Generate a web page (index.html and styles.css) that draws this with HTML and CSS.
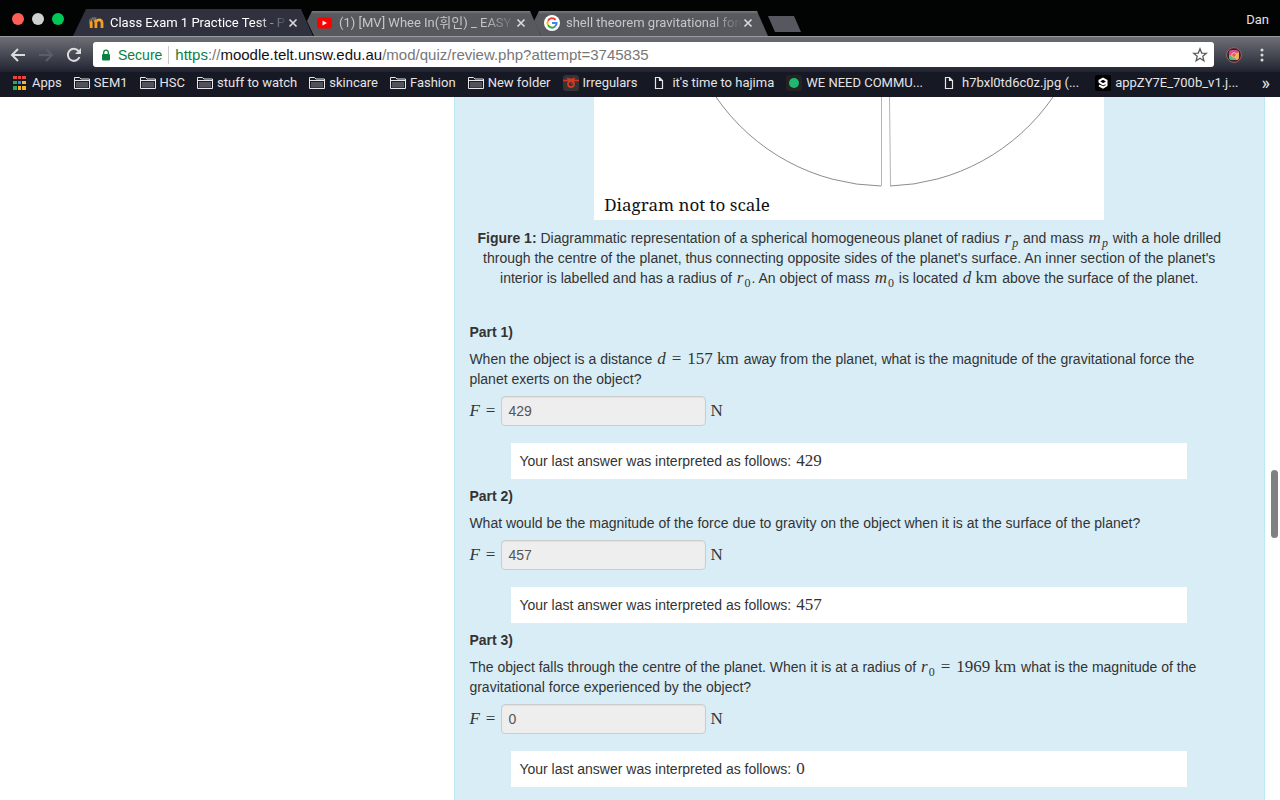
FILE: index.html
```html
<!DOCTYPE html>
<html lang="en">
<head>
<meta charset="utf-8">
<title>Class Exam 1 Practice Test</title>
<link rel="stylesheet" href="styles.css">
</head>
<body>
<svg class="defs" aria-hidden="true">
  <symbol id="folder" viewBox="0 0 16 14"><path d="M.5 12.500V1.500H5.500L7 3H15.500V12.500Z" fill="#1a1c27" stroke="#e6e6e8"/><path d="M2 6H14V11.500H2Z" fill="#50535d"/><path d="M1 4.500H15" stroke="#e6e6e8"/></symbol>
  <symbol id="page" viewBox="0 0 10 14"><path d="M1.500 1.500H5.500L8.500 4.500V12.500H1.500ZM5.500 1.500V4.500H8.500" fill="none" stroke="#e6e6e8" stroke-width="1.200"/></symbol>
  <symbol id="close" viewBox="0 0 10 10"><path d="M1.500 1.500L8.500 8.500M8.500 1.500L1.500 8.500" stroke="#d8d8da" stroke-width="1.700"/></symbol>
</svg>
<header class="browser">
  <div class="tabstrip">
    <div class="lights"><span class="light red"></span><span class="light grey"></span><span class="light green"></span></div>
    <div class="tabs">
      <div class="tab active">
        <svg class="favicon" viewBox="0 0 16 16"><path d="M3.200 13V6.500M7.900 13V7.500Q7.900 5 5.700 5M8.500 6Q9.500 4.800 11 4.800 14 4.800 14 8V13" fill="none" stroke="#f39c1f" stroke-width="2.800"/><path d="M3.200 5V7M9 5Q11 4 13 5" stroke="#f7b959" fill="none"/><path d="M1 4.500L5 2 9 2.500 6.500 5.500Z" fill="#6b6762"/><path d="M1.500 4.500V9.500" stroke="#777" stroke-width=".8"/></svg>
        <span class="title">Class Exam 1 Practice Test - P</span>
        <button class="close" aria-label="Close tab"><svg><use href="#close"/></svg></button>
      </div>
      <div class="tab">
        <svg class="favicon" viewBox="0 0 16 16"><rect x="0" y="2.500" width="15" height="11" rx="2.500" fill="#f00"/><path d="M5.500 5.500L10 8 5.500 10.500Z" fill="#fff"/></svg>
        <span class="title">(1) [MV] Whee In(휘인) _ EASY</span>
        <button class="close" aria-label="Close tab"><svg><use href="#close"/></svg></button>
      </div>
      <div class="tab">
        <svg class="favicon" viewBox="0 0 16 16"><circle cx="8" cy="8" r="8" fill="#fff"/><g fill="none" stroke-width="2"><path d="M11.600 4.900A4.600 4.600 0 0 0 4 5.700" stroke="#ea4335"/><path d="M4 5.700A4.600 4.600 0 0 0 4 10.300" stroke="#fbbc05"/><path d="M4 10.300A4.600 4.600 0 0 0 11 11.500" stroke="#34a853"/><path d="M11 11.500A4.600 4.600 0 0 0 12.600 8H8" stroke="#4285f4"/></g></svg>
        <span class="title">shell theorem gravitational forc</span>
        <button class="close" aria-label="Close tab"><svg><use href="#close"/></svg></button>
      </div>
      <button class="newtab" aria-label="New tab"></button>
    </div>
    <button class="profile">Dan</button>
  </div>
  <div class="toolbar">
    <button class="nav" aria-label="Back"><svg viewBox="0 0 16 16"><path d="M15 8H2M8 2L2 8L8 14" fill="none" stroke="#dcdcdf" stroke-width="2"/></svg></button>
    <button class="nav" aria-label="Forward"><svg viewBox="0 0 16 16"><path d="M1 8H14M8 2L14 8L8 14" fill="none" stroke="#5b5e68" stroke-width="2"/></svg></button>
    <button class="nav" aria-label="Reload"><svg viewBox="0 0 16 16"><path d="M13.500 10A6 6 0 1 1 12.500 4" fill="none" stroke="#dcdcdf" stroke-width="2"/><path d="M15 1V7H9Z" fill="#dcdcdf"/></svg></button>
    <div class="address">
      <svg class="lock" viewBox="0 0 10 12"><rect x="1" y="5" width="8" height="6.500" rx="1" fill="#0b8043"/><path d="M2.700 5V3.500A2.300 2.300 0 0 1 7.300 3.500V5" fill="none" stroke="#0b8043" stroke-width="1.300"/></svg>
      <span class="secure">Secure</span>
      <span class="url"><span class="green-text">https</span>://<span class="host">moodle.telt.unsw.edu.au</span>/mod/quiz/review.php?attempt=3745835</span>
      <button class="star" aria-label="Bookmark this page"><svg viewBox="0 0 16 16"><path d="M8 1.800L9.700 6.100 14.300 6.400 10.800 9.300 11.900 13.800 8 11.300 4.100 13.800 5.200 9.300 1.700 6.400 6.300 6.100Z" fill="none" stroke="#5a5a5a" stroke-width="1.300"/></svg></button>
    </div>
    <button class="ext" aria-label="Extension"><svg viewBox="0 0 16 16"><circle cx="8" cy="8" r="7.400" fill="#33242f" stroke="#a5606a"/><rect x="3" y="3" width="10" height="10" rx="3" fill="#d94f8c"/><path d="M3 8L8 8L12 13H6Q3 13 3 10Z" fill="#58c070"/><path d="M8 8L13 5V10Q13 13 10 13Z" fill="#f6b04b"/><circle cx="8" cy="8" r="2.300" fill="#e85a55" stroke="#f7d9b0" stroke-width=".8"/></svg></button>
    <button class="menu" aria-label="Menu"><svg viewBox="0 0 4 14"><circle cx="2" cy="2" r="1.500"/><circle cx="2" cy="7" r="1.500"/><circle cx="2" cy="12" r="1.500"/></svg></button>
  </div>
  <nav class="bookmarks">
    <a href="#"><svg class="apps" viewBox="0 0 13 14"><path d="M0 0h4v3H0zM5 0h3v3H5zM9 0h4v3H9z" fill="#e8453c"/><path d="M0 5h4v3H0zM0 10h4v4H0z" fill="#2da94f"/><path d="M5 5h3v3H5z" fill="#3b82f0"/><path d="M9 5h4v3H9zM5 10h3v4H5zM9 10h4v4H9z" fill="#f5b32e"/></svg>Apps</a>
    <a href="#"><svg class="fold"><use href="#folder"/></svg>SEM1</a>
    <a href="#"><svg class="fold"><use href="#folder"/></svg>HSC</a>
    <a href="#"><svg class="fold"><use href="#folder"/></svg>stuff to watch</a>
    <a href="#"><svg class="fold"><use href="#folder"/></svg>skincare</a>
    <a href="#"><svg class="fold"><use href="#folder"/></svg>Fashion</a>
    <a href="#"><svg class="fold"><use href="#folder"/></svg>New folder</a>
    <a href="#"><svg class="site" viewBox="0 0 16 16"><rect width="16" height="16" rx="3" fill="#353335"/><path d="M0 5H5L4 3 8 4 12 3 11 5H16V6H0Z" fill="#d23a22" stroke="#d23a22" stroke-width=".6"/><circle cx="8" cy="9" r="3" fill="none" stroke="#d23a22" stroke-width="1.800"/><path d="M8 9L10 7.500" stroke="#d23a22"/></svg>Irregulars</a>
    <a href="#"><svg class="sheet"><use href="#page"/></svg>it's time to hajima</a>
    <a href="#" class="clipped"><svg class="site" viewBox="0 0 16 16"><rect width="16" height="16" rx="2" fill="#25231f"/><circle cx="8" cy="8" r="5" fill="#1eb872"/></svg>WE NEED COMMU...</a>
    <a href="#" class="clipped"><svg class="sheet"><use href="#page"/></svg>h7bxl0td6c0z.jpg (...</a>
    <a href="#"><svg class="site" viewBox="0 0 16 16"><rect width="16" height="16" rx="2" fill="#000"/><path d="M11.500 7.500L8 9.300 4.500 7V5.500L8 3.700 11.500 5.500V10.500L8 12.500 4 10.300" fill="none" stroke="#fff" stroke-width="2"/></svg>appZY7E_700b_v1.j...</a>
    <button class="more" aria-label="More bookmarks">»</button>
  </nav>
</header>
<main class="page">
  <article class="question">
    <figure>
      <div class="diagram">
        <svg viewBox="0 0 510 93" aria-hidden="true"><g fill="none" stroke="#8c8c8c"><path d="M122 0A205 205 0 0 0 287 89"/><path d="M296 89A205 205 0 0 0 459 0"/><path d="M287.500 0V89M295.500 0L296.500 89" stroke="#b4b4b4"/></g></svg>
        <p>Diagram not to scale</p>
      </div>
      <figcaption><b>Figure 1:</b> Diagrammatic representation of a spherical homogeneous planet of radius <span class="math"><i>r</i><sub><i>p</i></sub></span> and mass <span class="math"><i>m</i><sub><i>p</i></sub></span> with a hole drilled through the centre of the planet, thus connecting opposite sides of the planet's surface. An inner section of the planet's interior is labelled and has a radius of <span class="math"><i>r</i><sub>0</sub></span>. An object of mass <span class="math"><i>m</i><sub>0</sub></span> is located <span class="math"><i>d</i> km</span> above the surface of the planet.</figcaption>
    </figure>
    <section>
      <h2>Part 1)</h2>
      <p>When the object is a distance <span class="math"><i>d</i><span class="eq">=</span>157 km</span> away from the planet, what is the magnitude of the gravitational force the planet exerts on the object?</p>
      <div class="answer"><label class="math" for="a1"><i>F</i><span class="eq">=</span></label><input id="a1" type="text" value="429" readonly><span class="math">N</span></div>
      <div class="feedback">Your last answer was interpreted as follows: <span class="math">429</span></div>
    </section>
    <section>
      <h2>Part 2)</h2>
      <p>What would be the magnitude of the force due to gravity on the object when it is at the surface of the planet?</p>
      <div class="answer"><label class="math" for="a2"><i>F</i><span class="eq">=</span></label><input id="a2" type="text" value="457" readonly><span class="math">N</span></div>
      <div class="feedback">Your last answer was interpreted as follows: <span class="math">457</span></div>
    </section>
    <section>
      <h2>Part 3)</h2>
      <p>The object falls through the centre of the planet. When it is at a radius of <span class="math"><i>r</i><sub>0</sub><span class="eq">=</span>1969 km</span> what is the magnitude of the gravitational force experienced by the object?</p>
      <div class="answer"><label class="math" for="a3"><i>F</i><span class="eq">=</span></label><input id="a3" type="text" value="0" readonly><span class="math">N</span></div>
      <div class="feedback">Your last answer was interpreted as follows: <span class="math">0</span></div>
    </section>
  </article>
  <div class="scrollbar"></div>
</main>
</body>
</html>
```
FILE: styles.css
```css
* { box-sizing: border-box; }
body { margin: 0; height: 100vh; display: flex; flex-direction: column; overflow: hidden; background: #fff; font-family: "Liberation Sans", Arial, sans-serif; }
button { border: 0; padding: 0; background: none; font: inherit; color: inherit; }
svg { display: block; flex: none; }
.defs { position: absolute; width: 0; height: 0; }

.browser { flex: none; color: #e4e4e6; font-family: Roboto, "Noto Sans CJK KR", sans-serif; font-size: 13px; }
.tabstrip { display: flex; height: 36px; padding: 0 11px 0 12px; background: #020303; }
.lights { display: flex; gap: 8px; padding-top: 13px; width: 61px; }
.light { width: 12px; height: 12px; border-radius: 50%; }
.red { background: #ff5f57; }
.grey { background: #d0d0d0; }
.green { background: #00ca56; }
.tabs { flex: 1; display: flex; padding-top: 9px; }
.tab { width: 240px; height: 27px; padding: 0 15px; display: flex; align-items: center; gap: 6px; background: #2f323e; clip-path: polygon(13px 0, 228px 0, 100% 100%, 0 100%); }
.tab + .tab { margin-left: -6px; width: 234px; height: 25px; margin-top: 2px; padding: 0 15px 2px 10px; background: linear-gradient(#7b7b7e 0, #58595f 3px); clip-path: polygon(5px 0, 223px 0, 100% 100%, 7px 100%, 0 40%); }
.tab + .tab + .tab { margin-left: -7px; }
.favicon { width: 16px; height: 16px; }
.title { flex: 1; margin-right: -6px; overflow: hidden; white-space: nowrap; line-height: 18px; color: #c6c6c8; mask-image: linear-gradient(90deg, #000 82%, transparent); }
.active .title { color: #fff; }
.close svg { width: 10px; height: 10px; }
.newtab { width: 33px; height: 16px; margin-top: 7px; background: #565860; clip-path: polygon(0 0, 26px 0, 100% 100%, 7px 100%); }
.profile { height: 38px; }

.toolbar { display: flex; align-items: center; height: 36px; padding: 0 16px 0 10px; gap: 12px; border-top: 1px solid #9a9b9e; background: linear-gradient(#6d6f76, #2c303c 85%, #20232f); }
.nav svg { width: 16px; height: 16px; }
.address { flex: 1; display: flex; align-items: center; height: 25px; margin-left: -1px; padding: 0 6px 0 8px; background: #fff; border-radius: 3px; color: #777; font: 15px/18px "Liberation Sans", Arial, sans-serif; }
.lock { width: 10px; height: 12px; }
.secure { margin-left: 7px; padding-right: 6px; border-right: 1px solid #ccc; color: #0b8043; font-size: 14px; }
.url { flex: 1; padding-left: 6px; }
.green-text { color: #0b8043; }
.host { color: #111; }
.star svg, .ext svg { width: 16px; height: 16px; }
.ext { margin-right: 6px; }
.menu svg { width: 4px; height: 14px; fill: #dcdcdf; }

.bookmarks { display: flex; align-items: center; gap: 12px; height: 25px; padding: 0 10px 4px 13px; background: #161823; white-space: nowrap; }
.bookmarks a { display: flex; align-items: center; gap: 4px; color: #e4e4e6; text-decoration: none; }
.bookmarks .clipped { margin-right: 4px; }
.apps { width: 13px; height: 14px; margin-right: 2px; }
.fold { width: 16px; height: 14px; }
.site { width: 16px; height: 16px; }
.sheet { width: 10px; height: 14px; margin: 0 4px 0 5px; }
.more { margin-left: auto; font-size: 18px; }

.page { flex: 1; position: relative; min-height: 0; display: flex; justify-content: flex-end; padding-right: 15px; }
.question { width: calc(64% + 1px); height: 720px; padding: 0 35px 0 14px; background: #d9edf6; border: solid #bce8f1; border-width: 0 1px; color: #333; font-size: 14px; line-height: 20px; }
.question p { margin: 0 0 7px; }
figure { margin: 0 0 34px; }
.diagram { width: 510px; margin: 0 auto; height: 123px; background: #fff; }
.question .diagram p { margin: 5px 0 0 10px; font: 17px/20px "Noto Serif", "Liberation Serif", serif; color: #111; }
figcaption { padding-top: 8px; text-align: center; }
.math { margin: 0 1px; font: 17px/16px "Liberation Serif", serif; white-space: nowrap; }
.eq { margin: 0 6px; }
sub { margin-left: 1px; font-size: 12px; line-height: 0; }
h2 { margin: 0 0 7px; font-size: 14px; line-height: 20px; }
.answer { display: flex; align-items: center; gap: 4px; }
.answer .math { margin: 0; }
.answer .eq { margin-right: 2px; }
.answer input { width: 205px; height: 30px; padding: 4px 6px; border: 1px solid #ccc; border-radius: 4px; background: #eee; color: #555; font: 14px/20px "Liberation Sans", Arial, sans-serif; box-shadow: inset 0 1px 1px #e0e0e0; }
.feedback { margin: 17px 42px 7px; padding: 8px; background: #fff; }
.scrollbar { position: absolute; right: 2px; top: 373px; width: 7px; height: 68px; border-radius: 4px; background: #808080; }
```
